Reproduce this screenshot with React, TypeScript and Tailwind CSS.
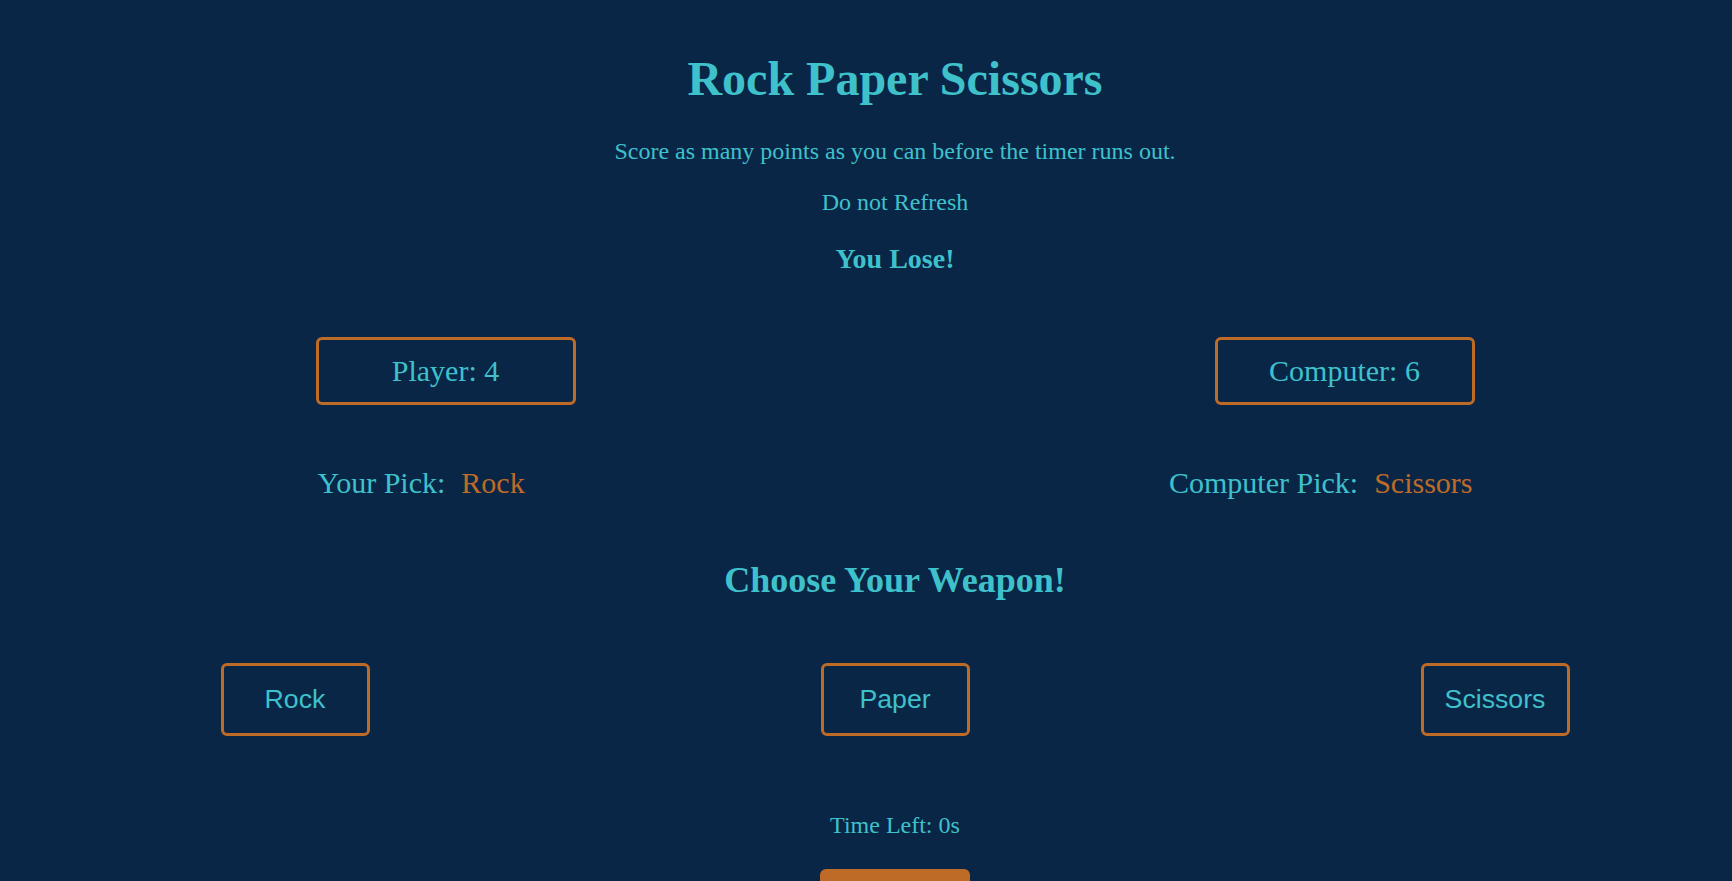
import type { FC } from "react";

const serif = "font-['Liberation_Serif','Times_New_Roman',serif]";
const sans = "font-['Liberation_Sans',Arial,sans-serif]";

const ScoreBox: FC<{ label: string; value: number }> = ({ label, value }) => (
  <div className="flex h-[68px] w-[260px] items-center justify-center rounded-[6px] border-[3px] border-[#bf6b28] text-[30px] leading-[30px]">
    {label}: {value}
  </div>
);

const WeaponButton: FC<{ name: string }> = ({ name }) => (
  <button
    className={`${sans} flex h-[73px] w-[149px] items-center justify-center rounded-[6px] border-[3px] border-[#bf6b28] bg-transparent text-[26.7px] leading-[27px] text-[#3fc1cb]`}
  >
    {name}
  </button>
);

export default function App() {
  return (
    <div className={`${serif} min-h-screen w-full overflow-hidden bg-[#0a2647] text-[#3fc1cb]`}>
      <div className="flex flex-col items-center pl-[58px]">
        <h1 className="mt-[55px] text-[48px] font-bold leading-[48px]">Rock Paper Scissors</h1>
        <p className="mt-[36px] text-[24px] leading-[24px]">
          Score as many points as you can before the timer runs out.
        </p>
        <p className="mt-[27px] text-[24px] leading-[24px]">Do not Refresh</p>
        <h3 className="mt-[31px] text-[28px] font-bold leading-[28px]">You Lose!</h3>

        <div className="mt-[64px] flex w-[1159px] justify-between">
          <ScoreBox label="Player" value={4} />
          <ScoreBox label="Computer" value={6} />
        </div>

        <div className="mt-[63px] flex w-[1159px] justify-between text-[30px] leading-[30px]">
          <div className="flex gap-[16px] pl-[2px]">
            <span>Your Pick:</span>
            <span className="text-[#bf6b28]">Rock</span>
          </div>
          <div className="flex gap-[16px] pr-[2px]">
            <span>Computer Pick:</span>
            <span className="text-[#bf6b28]">Scissors</span>
          </div>
        </div>

        <h2 className="mt-[64px] text-[36px] font-bold leading-[36px]">Choose Your Weapon!</h2>

        <div className="mt-[65px] flex w-[1349px] justify-between">
          <WeaponButton name="Rock" />
          <WeaponButton name="Paper" />
          <WeaponButton name="Scissors" />
        </div>

        <p className="mt-[77px] text-[24px] leading-[24px]">Time Left: 0s</p>

        <button
          aria-label="Restart"
          className="mt-[32px] mb-[40px] h-[73px] w-[150px] rounded-[6px] bg-[#bf6b28]"
        />
      </div>
    </div>
  );
}
